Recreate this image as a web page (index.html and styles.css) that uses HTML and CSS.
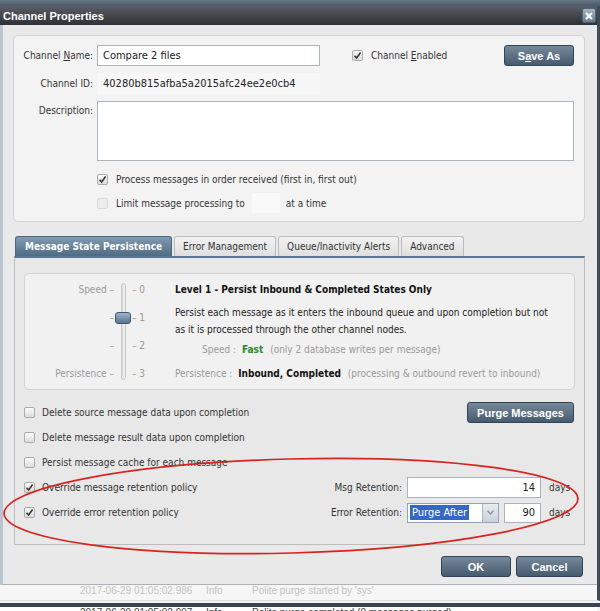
FILE: index.html
```html
<!DOCTYPE html>
<html lang="en">
<head>
  <meta charset="UTF-8">
  <title>Channel Properties</title>
  <link rel="stylesheet" href="styles.css">
</head>
<body>
  <div class="app-strip"></div>

  <div class="dialog">
    <div class="titlebar">
      <span class="title">Channel Properties</span>
      <span class="close">
        <svg width="8" height="8" viewBox="0 0 8 8"><path d="M1 1 L7 7 M7 1 L1 7" stroke="#fff" stroke-width="2"/></svg>
      </span>
    </div>

    <div class="dialog-body">
      <div class="panel top-panel">
        <div class="row r-name">
          <label class="lbl">Channel <u>N</u>ame:</label>
          <div class="field">Compare 2 files</div>
          <span class="cb checked enabled-cb"><svg width="9" height="9" viewBox="0 0 9 9"><path d="M1.5 4.8 L3.6 7 L7.6 1.6" fill="none" stroke="#333" stroke-width="1.6"/></svg></span>
          <span class="cb-text">Channel <u>E</u>nabled</span>
          <button class="btn save-btn">S<u>a</u>ve As</button>
        </div>
        <div class="row r-id">
          <label class="lbl">Channel ID:</label>
          <div class="field readonly">40280b815afba5a2015afc24ee2e0cb4</div>
        </div>
        <div class="row r-desc">
          <label class="lbl">Description:</label>
          <div class="field desc"></div>
        </div>
        <div class="row r-check indent">
          <span class="cb checked"><svg width="9" height="9" viewBox="0 0 9 9"><path d="M1.5 4.8 L3.6 7 L7.6 1.6" fill="none" stroke="#333" stroke-width="1.6"/></svg></span>
          <span class="cb-text">Process messages in order received (first in, first out)</span>
        </div>
        <div class="row r-limit indent">
          <span class="cb disabled"></span>
          <span class="cb-text">Limit message processing to</span>
          <div class="limit-box"></div>
          <span class="after-text">at a time</span>
        </div>
      </div>

      <div class="tabs">
        <div class="tab active">Message State Persistence</div>
        <div class="tab">Error Management</div>
        <div class="tab">Queue/Inactivity Alerts</div>
        <div class="tab">Advanced</div>
      </div>

      <div class="tab-panel">
        <div class="panel persist">
          <div class="scale-left">
            <div>Speed &ndash;</div>
            <div>&ndash;</div>
            <div>&ndash;</div>
            <div>Persistence &ndash;</div>
          </div>
          <div class="track-col">
            <div class="track"></div>
            <div class="thumb"></div>
          </div>
          <div class="scale-right">
            <div>&ndash; 0</div>
            <div>&ndash; 1</div>
            <div>&ndash; 2</div>
            <div>&ndash; 3</div>
          </div>
          <div class="level-info">
            <div class="level-title">Level 1 - Persist Inbound &amp; Completed States Only</div>
            <p class="level-desc">Persist each message as it enters the inbound queue and upon completion but not<br>as it is processed through the other channel nodes.</p>
            <div class="stat speed"><span class="muted">Speed :</span> <b class="fast">Fast</b> <span class="muted note">(only 2 database writes per message)</span></div>
            <div class="stat"><span class="muted">Persistence :</span> <b>Inbound, Completed</b> <span class="muted note">(processing &amp; outbound revert to inbound)</span></div>
          </div>
        </div>

        <div class="options">
          <div class="opt">
            <span class="cb"></span>
            <span class="cb-text">Delete source message data upon completion</span>
            <button class="btn purge-btn">Purge Messages</button>
          </div>
          <div class="opt">
            <span class="cb"></span>
            <span class="cb-text">Delete message result data upon completion</span>
          </div>
          <div class="opt">
            <span class="cb"></span>
            <span class="cb-text">Persist message cache for each message</span>
          </div>
          <div class="opt">
            <span class="cb checked"><svg width="9" height="9" viewBox="0 0 9 9"><path d="M1.5 4.8 L3.6 7 L7.6 1.6" fill="none" stroke="#333" stroke-width="1.6"/></svg></span>
            <span class="cb-text">Override message retention policy</span>
            <div class="retention">
              <span class="ret-label">Msg Retention:</span>
              <div class="field num wide">14</div>
              <span class="days">days</span>
            </div>
          </div>
          <div class="opt">
            <span class="cb checked"><svg width="9" height="9" viewBox="0 0 9 9"><path d="M1.5 4.8 L3.6 7 L7.6 1.6" fill="none" stroke="#333" stroke-width="1.6"/></svg></span>
            <span class="cb-text">Override error retention policy</span>
            <div class="retention">
              <span class="ret-label">Error Retention:</span>
              <div class="select">
                <span class="sel-value"><span class="sel-hl">Purge After</span></span>
                <span class="sel-arrow"><svg width="7" height="5" viewBox="0 0 7 5"><path d="M0.5 0.8 L3.5 4 L6.5 0.8" fill="none" stroke="#8a96a2" stroke-width="1.3"/></svg></span>
              </div>
              <div class="field num short">90</div>
              <span class="days">days</span>
            </div>
          </div>
        </div>
      </div>

      <div class="actions">
        <button class="btn ok-btn">OK</button>
        <button class="btn cancel-btn">Cancel</button>
      </div>
    </div>
  </div>

  <div class="log">
    <div class="log-row">
      <span class="col-date">2017-06-29 01:05:02.986</span>
      <span class="col-level">Info</span>
      <span class="col-msg">Polite purge started by 'sys'</span>
    </div>
    <div class="log-bar"></div>
    <div class="log-row next">
      <span class="col-date">2017-06-29 01:05:02.997</span>
      <span class="col-level">Info</span>
      <span class="col-msg">Polite purge completed (0 messages purged)</span>
    </div>
  </div>

  <svg class="annotation" width="600" height="611" viewBox="0 0 600 611">
    <ellipse cx="291" cy="506" rx="287" ry="47" transform="rotate(-1.5 291 506)" fill="none" stroke="#d8231f" stroke-width="1.7"/>
  </svg>
</body>
</html>
```

FILE: styles.css
```css
body {
  position: relative;
  margin: 0;
  width: 600px;
  height: 611px;
  overflow: hidden;
  background: #f4f4f4;
  font-family: "DejaVu Sans Condensed", "Liberation Sans", sans-serif;
  font-size: 10px;
  color: #222;
}

.app-strip {
  height: 6px;
  background: linear-gradient(to bottom, #667786, #4c5a67);
}

.dialog {
  width: 597px;
  border-right: 3px solid #3f4c58;
  background: #e9e9e9;
}

.titlebar {
  height: 19px;
  display: flex;
  align-items: center;
  justify-content: space-between;
  padding: 0 1px 0 3px;
  background: linear-gradient(to bottom, #5a5f65, #2c3035);
}

.title {
  font-family: "Liberation Sans", sans-serif;
  font-weight: bold;
  font-size: 11px;
  color: #fff;
}

.close {
  width: 14px;
  height: 15px;
  display: flex;
  align-items: center;
  justify-content: center;
  border: 1px solid #50616f;
  border-radius: 2px;
  box-sizing: border-box;
  background: linear-gradient(to bottom, #a5b6c5, #667c8f);
}

.dialog-body {
  border-left: 3px solid #b9c6d1;
  border-bottom: 1px solid #aab4bd;
  padding: 10px 12px 7px 10px;
}

.panel {
  border: 1px solid #d3d3d3;
  border-radius: 5px;
  background: #f3f3f3;
}

.top-panel {
  padding: 9px 10px 8px 9px;
}

.row {
  display: flex;
  align-items: center;
}

.lbl {
  width: 70px;
  margin-right: 4px;
  text-align: right;
  color: #333;
}

.field {
  box-sizing: border-box;
  width: 223px;
  height: 21px;
  display: flex;
  align-items: center;
  padding: 0 5px;
  border: 1px solid #aab4be;
  background: #fff;
  font-size: 11px;
  color: #222;
}

.field.readonly {
  border-color: #f7f7f7;
  background: #f7f7f7;
}

.r-name, .r-id {
  height: 21px;
  margin-bottom: 7px;
}

.r-desc {
  align-items: flex-start;
}

.r-desc .lbl {
  margin-top: 4px;
}

.field.desc {
  flex: 1;
  height: 60px;
}

.indent {
  padding-left: 74px;
}

.r-check {
  height: 14px;
  margin-top: 11px;
}

.r-limit {
  height: 20px;
  margin-top: 7px;
}

.cb {
  box-sizing: border-box;
  width: 11px;
  height: 11px;
  flex: none;
  display: flex;
  align-items: center;
  justify-content: center;
  border: 1px solid #ababab;
  border-radius: 2px;
  background: linear-gradient(to bottom, #fbfbfb, #dcdcdc);
}

.cb.disabled {
  border-color: #dadada;
  background: #ececec;
}

.cb-text {
  margin-left: 8px;
  color: #333;
}

.enabled-cb {
  margin-left: 32px;
}

.limit-box {
  width: 28px;
  height: 20px;
  margin-left: 7px;
  background: #f9f9f9;
}

.after-text {
  margin-left: 6px;
  color: #333;
}

.btn {
  box-sizing: border-box;
  height: 21px;
  padding: 0;
  border: 1px solid #334555;
  border-radius: 3px;
  background: linear-gradient(to bottom, #76899a, #465b6e);
  color: #fff;
  font-family: "Liberation Sans", sans-serif;
  font-weight: bold;
  font-size: 11px;
}

.save-btn {
  width: 70px;
  margin-left: auto;
}

.tabs {
  display: flex;
  gap: 2px;
  margin-top: 14px;
  padding-left: 2px;
}

.tab {
  height: 20px;
  box-sizing: border-box;
  display: flex;
  align-items: center;
  padding: 0 8px;
  border: 1px solid #bcbcbc;
  border-bottom: none;
  border-radius: 3px 3px 0 0;
  background: linear-gradient(to bottom, #f2f2f2, #dfdfdf);
  color: #333;
}

.tab.active {
  padding: 0 9px;
  border-color: #4d6780;
  background: linear-gradient(to bottom, #829bb1, #4f6b85);
  color: #fff;
  font-weight: bold;
}

.tab-panel {
  margin-left: 1px;
  padding: 15px 9px 19px;
  border: 1px solid #bdbdbd;
  border-top: 2px solid #5b7690;
  background: #e8e8e8;
}

.persist {
  display: flex;
  padding: 2px 0 1px;
  background: #f1f1f1;
}

.scale-left, .scale-right {
  color: #9a9a9a;
}

.scale-left div, .scale-right div {
  height: 28px;
  line-height: 28px;
}

.scale-left {
  width: 89px;
  text-align: right;
}

.track-col {
  position: relative;
  width: 18px;
}

.track {
  width: 5px;
  height: 97px;
  margin: 7px auto 0;
  border: 1px solid #c7c7c7;
  border-radius: 3px;
  box-sizing: border-box;
  background: linear-gradient(to right, #dcdcdc, #f4f4f4);
}

.thumb {
  position: absolute;
  left: 1px;
  top: 36px;
  width: 16px;
  height: 12px;
  box-sizing: border-box;
  border: 1px solid #3e5870;
  border-radius: 3px;
  background: linear-gradient(to bottom, #9cb2c6, #5a7590);
}

.scale-right {
  width: 43px;
}

.level-info {
  flex: 1;
}

.level-title {
  line-height: 28px;
  font-weight: bold;
  color: #111;
}

.level-desc {
  margin: 0;
  line-height: 17px;
  color: #222;
}

.stat {
  line-height: 24px;
  color: #111;
}

.stat.speed {
  padding-left: 27px;
}

.muted {
  color: #9a9a9a;
}

.note {
  margin-left: 4px;
}

.fast {
  color: #2b8a2b;
  margin-left: 3px;
}

.stat b {
  margin-left: 3px;
}

.options {
  margin-top: 10px;
}

.opt {
  height: 25px;
  display: flex;
  align-items: center;
}

.opt .cb-text {
  margin-left: 7px;
}

.purge-btn {
  width: 107px;
  margin-left: auto;
  margin-right: 1px;
}

.retention {
  margin-left: auto;
  display: flex;
  align-items: center;
}

.ret-label {
  margin-right: 5px;
  color: #333;
}

.field.num {
  justify-content: flex-end;
  font-size: 11px;
}

.field.wide {
  width: 134px;
}

.field.short {
  width: 37px;
  height: 20px;
  margin-left: 5px;
}

.days {
  width: 26px;
  margin-left: 8px;
  color: #333;
}

.select {
  box-sizing: border-box;
  width: 92px;
  height: 20px;
  display: flex;
  border: 1px solid #8ea4ba;
  background: #fff;
}

.sel-value {
  flex: 1;
  display: flex;
  align-items: center;
  padding-left: 2px;
}

.sel-hl {
  padding: 1px 2px;
  background: #3268c8;
  color: #fff;
  font-size: 11px;
}

.sel-arrow {
  width: 15px;
  display: flex;
  align-items: center;
  justify-content: center;
  border-left: 1px solid #aab6c2;
  background: linear-gradient(to bottom, #e8ecf0, #c9d2da);
}

.actions {
  display: flex;
  justify-content: flex-end;
  gap: 5px;
  margin-top: 11px;
  padding-right: 2px;
}

.ok-btn {
  width: 70px;
}

.cancel-btn {
  width: 67px;
}

.log {
  font-family: "Liberation Sans", sans-serif;
  font-size: 10px;
}

.log-row {
  width: 597px;
  height: 15px;
  display: flex;
  align-items: flex-start;
  line-height: 12px;
  border-right: 3px solid #3f4c58;
  border-bottom: 1px solid #dedede;
  background: #f6f6f6;
  color: #c3c3c3;
}

.col-date {
  margin-left: 80px;
  width: 126px;
}

.col-level {
  width: 46px;
}

.log-bar {
  height: 4px;
  margin-top: 2px;
  background: #3b4652;
}

.log-row.next {
  height: 12px;
  border: none;
  background: #fff;
  color: #444;
  line-height: 12px;
}

.annotation {
  position: absolute;
  top: 0;
  left: 0;
  pointer-events: none;
}
```
